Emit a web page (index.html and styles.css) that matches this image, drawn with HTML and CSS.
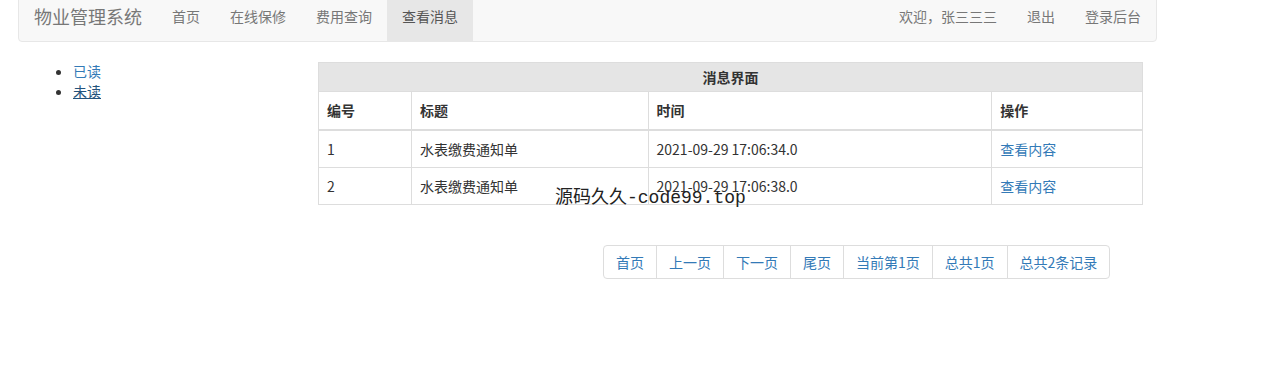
FILE: index.html
```html
<!DOCTYPE html>
<html lang="zh-CN">
<head>
    <meta charset="UTF-8">
    <title>物业管理系统</title>
    <link rel="stylesheet" href="styles.css">
</head>
<body>
    <nav class="navbar">
        <a class="brand" href="#">物业管理系统</a>
        <ul class="nav">
            <li><a href="#">首页</a></li>
            <li><a href="#">在线保修</a></li>
            <li><a href="#">费用查询</a></li>
            <li class="active"><a href="#">查看消息</a></li>
        </ul>
        <ul class="nav nav-right">
            <li><a href="#">欢迎，张三三三</a></li>
            <li><a href="#">退出</a></li>
            <li><a href="#">登录后台</a></li>
        </ul>
    </nav>

    <div class="page">
        <div class="sidebar">
            <ul class="side-list">
                <li><a href="#">已读</a></li>
                <li><a href="#" class="focus">未读</a></li>
            </ul>
        </div>
        <div class="main">
            <table class="msg-table">
                <tr><th colspan="4" class="caption">消息界面</th></tr>
                <tr class="head">
                    <th class="c1">编号</th>
                    <th class="c2">标题</th>
                    <th class="c3">时间</th>
                    <th class="c4">操作</th>
                </tr>
                <tr>
                    <td>1</td>
                    <td>水表缴费通知单</td>
                    <td>2021-09-29 17:06:34.0</td>
                    <td><a href="#">查看内容</a></td>
                </tr>
                <tr>
                    <td>2</td>
                    <td>水表缴费通知单</td>
                    <td>2021-09-29 17:06:38.0</td>
                    <td><a href="#">查看内容</a></td>
                </tr>
            </table>
            <ul class="pagination">
                <li><a href="#">首页</a></li>
                <li><a href="#">上一页</a></li>
                <li><a href="#">下一页</a></li>
                <li><a href="#">尾页</a></li>
                <li><a href="#">当前第1页</a></li>
                <li><a href="#">总共1页</a></li>
                <li><a href="#">总共2条记录</a></li>
            </ul>
        </div>
    </div>

    <div class="watermark">源码久久-code99.top</div>
</body>
</html>
```

FILE: styles.css
```css
* {
    box-sizing: border-box;
}

html, body {
    margin: 0;
    padding: 0;
}

body {
    font-family: "Noto Sans CJK SC", "Noto Sans", sans-serif;
    font-size: 14px;
    line-height: 20px;
    color: #333;
    background: #fff;
    position: relative;
    height: 375px;
    overflow: hidden;
}

a {
    color: #337ab7;
    text-decoration: none;
}

/* Top navbar */
.navbar {
    display: flex;
    width: 1139px;
    height: 52px;
    margin: -10px 0 0 18px;
    padding: 0 0 0 15px;
    background-color: #f8f8f8;
    border: 1px solid #e7e7e7;
    border-radius: 4px;
}

.brand {
    font-size: 18px;
    line-height: 20px;
    padding: 15px 15px 15px 0;
    color: #777;
}

.nav {
    display: flex;
    list-style: none;
    margin: 0;
    padding: 0;
}

.nav li a {
    display: block;
    height: 50px;
    padding: 15px;
    color: #777;
    line-height: 20px;
}

.nav li.active a {
    background-color: #e7e7e7;
    color: #555;
}

.nav-right {
    margin-left: auto;
}

/* Page body */
.page {
    display: flex;
    margin-top: 20px;
}

.sidebar {
    width: 318px;
    flex-shrink: 0;
}

.side-list {
    margin: -1px 0 0 33px;
    padding-left: 40px;
}

.side-list a.focus {
    color: #23527c;
    text-decoration: underline;
}

.main {
    width: 825px;
}

/* Message table */
.msg-table {
    width: 825px;
    border-collapse: collapse;
}

.msg-table th,
.msg-table td {
    border: 1px solid #ddd;
    padding: 8px;
    text-align: left;
    line-height: 20px;
    height: 37px;
}

.msg-table th {
    font-weight: bold;
}

.msg-table th.caption {
    background-color: #e5e5e5;
    text-align: center;
    padding: 4px 8px;
    height: 29px;
}

.msg-table tr.head th {
    border-bottom: 2px solid #ddd;
    height: 38px;
}

.c1 { width: 93px; }
.c2 { width: 237px; }
.c3 { width: 344px; }
.c4 { width: 151px; }

/* Pagination */
.pagination {
    display: flex;
    list-style: none;
    margin: 40px 0 0 285px;
    padding: 0;
}

.pagination li a {
    display: block;
    padding: 6px 12px;
    line-height: 20px;
    border: 1px solid #ddd;
    margin-left: -1px;
    background-color: #fff;
}

.pagination li:first-child a {
    margin-left: 0;
    border-radius: 4px 0 0 4px;
}

.pagination li:last-child a {
    border-radius: 0 4px 4px 0;
}

/* Watermark over the table */
.watermark {
    position: absolute;
    left: 555px;
    top: 186px;
    font-family: "Liberation Mono", "Noto Sans CJK SC", monospace;
    font-size: 18px;
    line-height: 24px;
    color: #222;
}
```
